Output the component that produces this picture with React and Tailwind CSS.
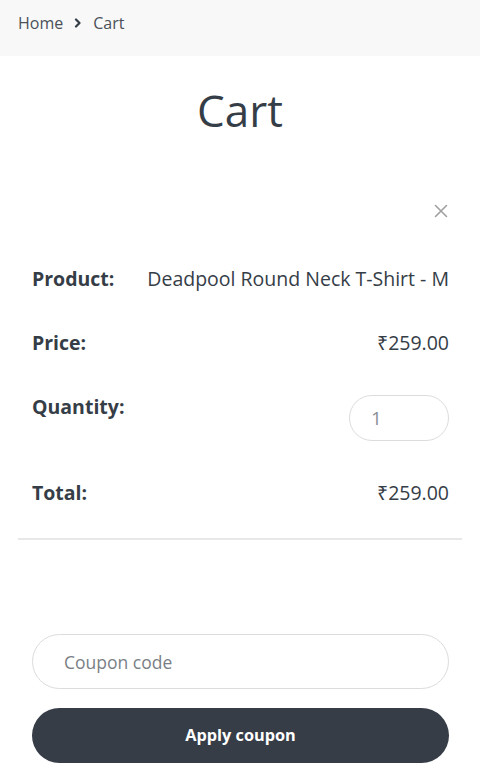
import React, { useState } from "react";

const rowClass = "flex justify-between items-start py-[20px] text-[19.5px] leading-[24px]";

export default function App() {
    const [qty, setQty] = useState(1);
    const [coupon, setCoupon] = useState("");

    return (
        <div className="min-h-[783px] bg-white text-[#353d47]" style={{ fontFamily: "'Open Sans', 'Liberation Sans', sans-serif" }}>
            {/* breadcrumb */}
            <nav className="h-[56px] bg-[#f8f8f8] px-[18px] pt-[11px]">
                <ol className="flex items-center text-[16px] leading-[24px] text-[#4b5058]">
                    <li>Home</li>
                    <li className="mx-[11px] flex items-center">
                        <svg width="8" height="10" viewBox="0 0 8 10" fill="none">
                            <path d="M2 1.5 L5.5 5 L2 8.5" stroke="#353d47" strokeWidth="2.2" strokeLinecap="round" strokeLinejoin="round" />
                        </svg>
                    </li>
                    <li>Cart</li>
                </ol>
            </nav>

            <main className="px-[18px]">
                <h1 className="mt-[28px] text-center text-[44px] leading-[53px] font-normal">Cart</h1>

                <div className="mt-[67px] pl-[14px] pr-[13px] border-b-2 border-[#e8e8e8] pb-[13px]">
                    <div className="flex justify-end h-[43px] items-start">
                        <button className="text-[#a0a0a0] leading-none pr-[1px]" aria-label="Remove item">
                            <svg width="14" height="14" viewBox="0 0 14 14">
                                <path d="M1.5 1.5 L12.5 12.5 M12.5 1.5 L1.5 12.5" stroke="currentColor" strokeWidth="1.6" strokeLinecap="round" />
                            </svg>
                        </button>
                    </div>

                    <div className={rowClass}>
                        <span className="font-bold">Product:</span>
                        <span>Deadpool Round Neck T-Shirt - M</span>
                    </div>
                    <div className={rowClass}>
                        <span className="font-bold">Price:</span>
                        <span>₹259.00</span>
                    </div>
                    <div className={rowClass}>
                        <span className="font-bold">Quantity:</span>
                        <input
                            type="number"
                            value={qty}
                            min={1}
                            onChange={(e) => setQty(e.target.value)}
                            className="w-[100px] h-[46px] rounded-[23px] border border-[#dcdcdc] px-[21px] text-[19px] text-[#8a8f96] outline-none [appearance:textfield]"
                        />
                    </div>
                    <div className={rowClass}>
                        <span className="font-bold">Total:</span>
                        <span>₹259.00</span>
                    </div>
                </div>

                <div className="mt-[94px] pl-[14px] pr-[13px] flex flex-col gap-[19px]">
                    <input
                        type="text"
                        value={coupon}
                        onChange={(e) => setCoupon(e.target.value)}
                        placeholder="Coupon code"
                        className="h-[55px] rounded-full border border-[#dcdcdc] px-[31px] text-[17.5px] text-[#353d47] placeholder:text-[#7a7f86] outline-none"
                    />
                    <button className="h-[55px] rounded-full bg-[#363d47] text-white text-[16.3px] font-bold">
                        Apply coupon
                    </button>
                </div>
            </main>
        </div>
    );
}
